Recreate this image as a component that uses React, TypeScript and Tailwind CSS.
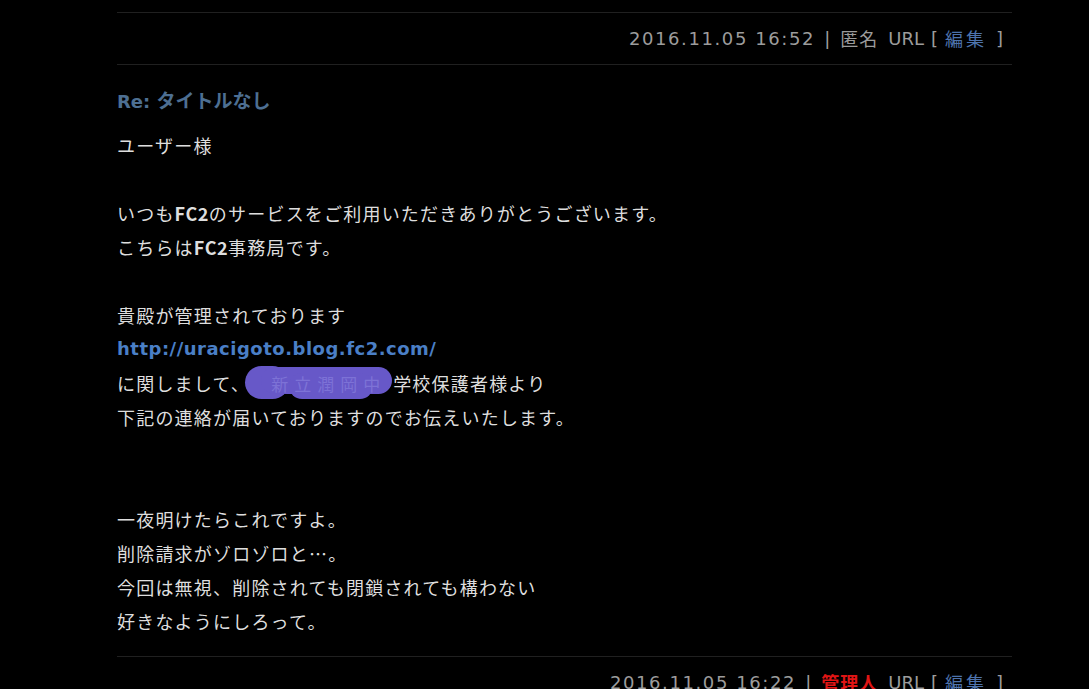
import React from "react";

const cjk = { fontFamily: '"Noto Sans CJK JP", "Noto Sans", sans-serif' };
const latin = { fontFamily: '"DejaVu Sans", "Noto Sans CJK JP", sans-serif' };

function Meta({ date, author, red }: { date: string; author: string; red?: boolean }) {
  return (
    <div className="flex justify-end pr-[9px] text-[18px] text-[#9c9c9c]" style={latin}>
      <span className="tracking-[1.6px]">{date}</span>
      <span className="ml-[9px]">|</span>
      <span className={"ml-[10px] tracking-[1px] " + (red ? "text-[#e01515] font-bold" : "")} style={cjk}>
        {author}
      </span>
      <span className="ml-[10px]">URL</span>
      <span className="ml-[7px]">[</span>
      <span className="ml-[7px] text-[#4d73ad] tracking-[3px]" style={cjk}>
        編集
      </span>
      <span className="ml-[9px]">]</span>
    </div>
  );
}

function Blob() {
  return (
    <span className="relative inline-block w-[124px] h-[18px] align-middle">
      <span className="absolute left-[-24px] top-[-11px] w-[44px] h-[33px] rounded-full bg-[#6758c8]" />
      <span className="absolute left-[-8px] top-[-10px] w-[131px] h-[27px] rounded-full bg-[#6758c8]" />
      <span className="absolute left-[20px] top-[-4px] w-[84px] h-[26px] rounded-full bg-[#6758c8]" />
      <span className="absolute left-[2px] top-[-5px] text-[17px] leading-[24px] text-[#7d72d6] tracking-[6px] whitespace-nowrap" style={cjk}>
        新立潤岡中
      </span>
    </span>
  );
}

export default function App() {
  return (
    <div className="w-[1089px] h-[689px] bg-black overflow-hidden">
      <div className="ml-[117px] w-[895px] pt-[12px]">
        <div className="h-px bg-[#202020]" />
        <div className="h-[51px] flex items-center justify-end">
          <div className="w-full">
            <Meta date="2016.11.05 16:52" author="匿名" />
          </div>
        </div>
        <div className="h-px bg-[#202020]" />

        <div className="mt-[18px] text-[18px] leading-[34px] font-bold text-[#4d6f92]">
          <span style={latin}>Re: </span>
          <span className="text-[19px]" style={cjk}>タイトルなし</span>
        </div>

        <div className="mt-[9px] text-[18px] leading-[34px] text-[#dedede] tracking-[1.2px]" style={cjk}>
          <div>ユーザー様</div>
          <div>&nbsp;</div>
          <div>
            いつも<span className="font-bold tracking-[0.5px]">FC2</span>のサービスをご利用いただきありがとうございます。
          </div>
          <div>
            こちらは<span className="font-bold tracking-[0.5px]">FC2</span>事務局です。
          </div>
          <div>&nbsp;</div>
          <div>貴殿が管理されております</div>
          <div className="font-bold text-[#4a7fc6] tracking-[0.5px]" style={latin}>
            http://uracigoto.blog.fc2.com/
          </div>
          <div className="whitespace-nowrap">
            に関しまして、そ<Blob />学校保護者様より
          </div>
          <div>下記の連絡が届いておりますのでお伝えいたします。</div>
          <div>&nbsp;</div>
          <div>&nbsp;</div>
          <div>一夜明けたらこれですよ。</div>
          <div>削除請求がゾロゾロと…。</div>
          <div>今回は無視、削除されても閉鎖されても構わない</div>
          <div>好きなようにしろって。</div>
        </div>

        <div className="mt-[18px] h-px bg-[#202020]" />
        <div className="pt-[12px]">
          <Meta date="2016.11.05 16:22" author="管理人" red />
        </div>
      </div>
    </div>
  );
}
